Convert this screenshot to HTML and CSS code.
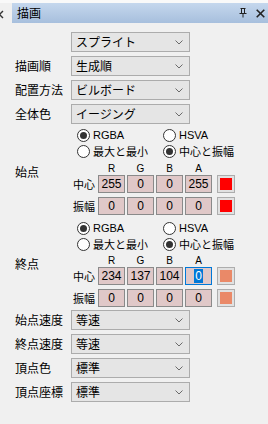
FILE: index.html
```html
<!DOCTYPE html>
<html lang="ja">
<head>
    <meta charset="UTF-8">
    <title>描画</title>
    <link rel="stylesheet" href="styles.css">
</head>
<body>
    <div class="top-edge"></div>
    <div class="header">
        <div class="tab-end">
            <svg width="12" height="20" viewBox="0 0 12 20"><path d="M-4 8 L3 15 M3 8 L-4 15" stroke="#333" stroke-width="1.4"/></svg>
        </div>
        <div class="titlebar">
            <span class="title">描画</span>
            <svg class="pin" width="8" height="10" viewBox="0 0 8 10"><path d="M1.5 0.5 H6.5 M2.5 0.5 V5.5 M5.5 0.5 V5.5 M0.5 5.5 H7.5 M4 5.5 V9.5" stroke="#222" stroke-width="1" fill="none"/></svg>
            <svg class="close" width="9" height="9" viewBox="0 0 9 9"><path d="M0.7 0.7 L8.3 8.3 M8.3 0.7 L0.7 8.3" stroke="#222" stroke-width="1.6"/></svg>
        </div>
    </div>

    <div class="panel">
        <div class="row">
            <span class="label"></span>
            <div class="combo"><span>スプライト</span><svg width="8" height="5" viewBox="0 0 8 5"><polyline points="0.5,0.5 4,4 7.5,0.5" fill="none" stroke="#6a6a6a"/></svg></div>
        </div>
        <div class="row">
            <span class="label">描画順</span>
            <div class="combo"><span>生成順</span><svg width="8" height="5" viewBox="0 0 8 5"><polyline points="0.5,0.5 4,4 7.5,0.5" fill="none" stroke="#6a6a6a"/></svg></div>
        </div>
        <div class="row">
            <span class="label">配置方法</span>
            <div class="combo"><span>ビルボード</span><svg width="8" height="5" viewBox="0 0 8 5"><polyline points="0.5,0.5 4,4 7.5,0.5" fill="none" stroke="#6a6a6a"/></svg></div>
        </div>
        <div class="row">
            <span class="label">全体色</span>
            <div class="combo"><span>イージング</span><svg width="8" height="5" viewBox="0 0 8 5"><polyline points="0.5,0.5 4,4 7.5,0.5" fill="none" stroke="#6a6a6a"/></svg></div>
        </div>

        <div class="radios first">
            <span class="radio on"><i></i><span class="latin">RGBA</span></span>
            <span class="radio"><i></i><span class="latin">HSVA</span></span>
        </div>
        <div class="radios">
            <span class="radio"><i></i>最大と最小</span>
            <span class="radio on"><i></i>中心と振幅</span>
        </div>

        <div class="color-block">
            <span class="label block-label">始点</span>
            <div class="color-table">
                <div class="heads"><span>R</span><span>G</span><span>B</span><span>A</span></div>
                <div class="cells">
                    <span class="row-label">中心</span>
                    <span class="cell">255</span><span class="cell">0</span><span class="cell">0</span><span class="cell">255</span>
                    <span class="swatch"><b class="red"></b></span>
                </div>
                <div class="cells">
                    <span class="row-label">振幅</span>
                    <span class="cell">0</span><span class="cell">0</span><span class="cell">0</span><span class="cell">0</span>
                    <span class="swatch"><b class="red"></b></span>
                </div>
            </div>
        </div>

        <div class="radios after-block">
            <span class="radio on"><i></i><span class="latin">RGBA</span></span>
            <span class="radio"><i></i><span class="latin">HSVA</span></span>
        </div>
        <div class="radios">
            <span class="radio"><i></i>最大と最小</span>
            <span class="radio on"><i></i>中心と振幅</span>
        </div>

        <div class="color-block second">
            <span class="label block-label">終点</span>
            <div class="color-table">
                <div class="heads"><span>R</span><span>G</span><span>B</span><span>A</span></div>
                <div class="cells">
                    <span class="row-label">中心</span>
                    <span class="cell">234</span><span class="cell">137</span><span class="cell">104</span><span class="cell focus"><em>0</em></span>
                    <span class="swatch"><b class="salmon"></b></span>
                </div>
                <div class="cells">
                    <span class="row-label">振幅</span>
                    <span class="cell">0</span><span class="cell">0</span><span class="cell">0</span><span class="cell">0</span>
                    <span class="swatch"><b class="salmon"></b></span>
                </div>
            </div>
        </div>

        <div class="row after-block">
            <span class="label">始点速度</span>
            <div class="combo"><span>等速</span><svg width="8" height="5" viewBox="0 0 8 5"><polyline points="0.5,0.5 4,4 7.5,0.5" fill="none" stroke="#6a6a6a"/></svg></div>
        </div>
        <div class="row">
            <span class="label">終点速度</span>
            <div class="combo"><span>等速</span><svg width="8" height="5" viewBox="0 0 8 5"><polyline points="0.5,0.5 4,4 7.5,0.5" fill="none" stroke="#6a6a6a"/></svg></div>
        </div>
        <div class="row">
            <span class="label">頂点色</span>
            <div class="combo"><span>標準</span><svg width="8" height="5" viewBox="0 0 8 5"><polyline points="0.5,0.5 4,4 7.5,0.5" fill="none" stroke="#6a6a6a"/></svg></div>
        </div>
        <div class="row">
            <span class="label">頂点座標</span>
            <div class="combo"><span>標準</span><svg width="8" height="5" viewBox="0 0 8 5"><polyline points="0.5,0.5 4,4 7.5,0.5" fill="none" stroke="#6a6a6a"/></svg></div>
        </div>
    </div>
</body>
</html>
```

FILE: styles.css
```css
/* ---------- base ---------- */

* {
    box-sizing: border-box;
}

body {
    margin: 0;
    width: 268px;
    height: 424px;
    overflow: hidden;
    background: #f0f0f0;
    color: #000;
    font-family: "Noto Sans CJK JP", "Noto Sans", sans-serif;
    font-size: 12px;
    line-height: 16px;
}

.latin {
    font-family: "Liberation Sans", Arial, sans-serif;
    font-size: 11px;
}

/* ---------- title bar ---------- */

.top-edge {
    height: 3px;
    background: #f9f9f9;
}

.header {
    display: flex;
    height: 20px;
}

.tab-end {
    width: 12px;
    overflow: hidden;
}

.tab-end svg {
    display: block;
}

.titlebar {
    flex: 1;
    display: flex;
    align-items: center;
    padding: 0 2px 0 5px;
    background: linear-gradient(#c5d7ed, #a7bfdd);
}

.title {
    flex: 1;
}

.pin {
    margin-right: 9px;
}

.close {
    margin-right: 1px;
}

/* ---------- rows ---------- */

.panel {
    padding: 9px 0 0 15px;
}

.row {
    display: flex;
    align-items: center;
    height: 20px;
    margin-bottom: 4px;
}

.label {
    width: 56px;
    flex: none;
}

.combo {
    width: 119px;
    height: 20px;
    display: flex;
    align-items: center;
    justify-content: space-between;
    padding: 0 6px 0 4px;
    border: 1px solid #acacac;
    background: #e5e5e5;
}

/* ---------- radios ---------- */

.radios {
    display: flex;
    height: 16px;
    padding-left: 62px;
    font-size: 11px;
}

.radios.first {
    margin-top: -1px;
}

.radio {
    display: flex;
    align-items: center;
    width: 86px;
}

.radio i {
    width: 13px;
    height: 13px;
    margin-right: 3px;
    border: 1px solid #333;
    border-radius: 50%;
    background: #fff;
    display: flex;
    align-items: center;
    justify-content: center;
}

.radio.on i::after {
    content: "";
    width: 7px;
    height: 7px;
    border-radius: 50%;
    background: #333;
}

/* ---------- colour tables ---------- */

.color-block {
    display: flex;
    margin-top: 4px;
}

.color-block.second {
    margin-top: 3px;
}

.block-label {
    padding-top: 1px;
}

.heads {
    display: flex;
    gap: 2px;
    height: 12px;
    line-height: 11px;
    padding-left: 27px;
    font-family: "Liberation Sans", Arial, sans-serif;
    font-size: 10px;
}

.heads span {
    width: 27px;
    text-align: center;
}

.cells {
    display: flex;
    gap: 2px;
    height: 18px;
}

.cells + .cells {
    margin-top: 4px;
}

.row-label {
    width: 25px;
    padding-right: 1px;
    text-align: right;
    font-size: 11px;
    line-height: 18px;
}

.cell {
    width: 27px;
    height: 18px;
    line-height: 16px;
    text-align: center;
    border: 1px solid #8a8a8a;
    background: #e0c8c8;
    font-family: "Liberation Sans Narrow", "Liberation Sans", Arial, sans-serif;
    font-size: 12px;
}

.cell.focus {
    border-color: #0078d7;
}

.cell em {
    font-style: normal;
    padding: 0 1px;
    background: #0078d7;
    color: #fff;
}

.swatch {
    width: 18px;
    height: 18px;
    margin-left: 3px;
    padding: 2px;
    border: 1px solid #adadad;
    background: #e1e1e1;
}

.swatch b {
    display: block;
    width: 100%;
    height: 100%;
}

.red {
    background: #ff0000;
}

.salmon {
    background: #ea8968;
}

.row.after-block {
    margin-top: 3px;
}

.radios.after-block {
    margin-top: 5px;
}
```
